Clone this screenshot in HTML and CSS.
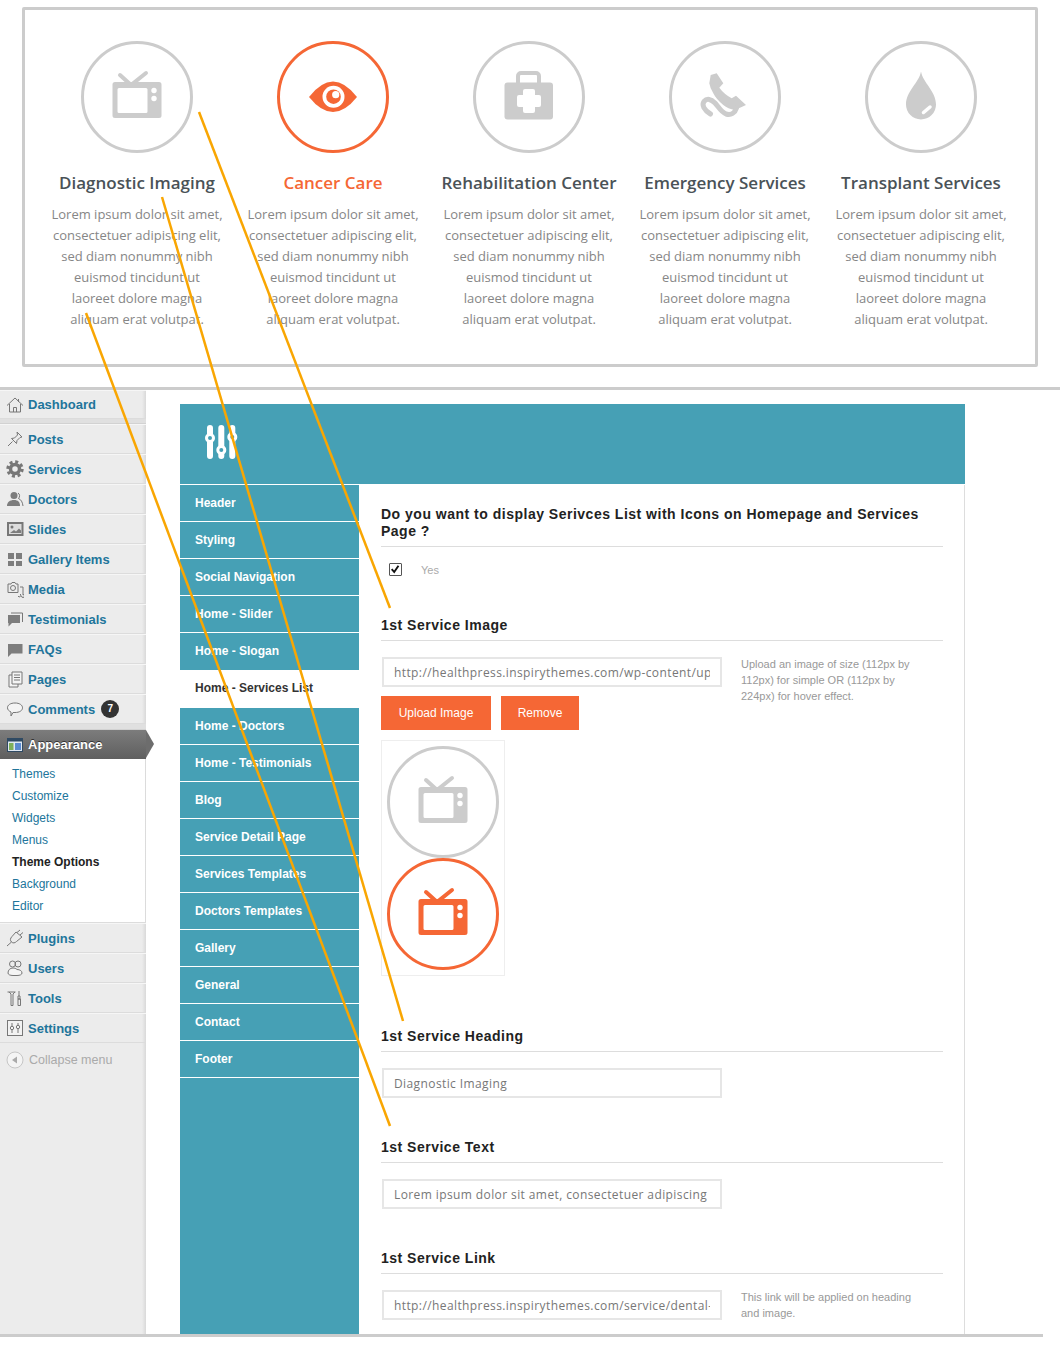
FILE: index.html
```html
<!DOCTYPE html>
<html lang="en">
<head>
  <meta charset="UTF-8" />
  <meta name="viewport" content="width=device-width, initial-scale=1" />
  <title>Services List</title>
  <link rel="stylesheet" href="styles.css">
</head>
<body>
  <svg class="hidden-defs" width="0" height="0">
    <defs>
      <symbol id="ic-tv" viewBox="0 0 112 112">
        <path d="M39 34l11 10 15-12" fill="none" stroke="currentColor" stroke-width="4" stroke-linecap="round" stroke-linejoin="miter" />
        <path fill-rule="evenodd" d="M34 41h44a2.500 2.500 0 0 1 2.500 2.500v31a2.500 2.500 0 0 1-2.500 2.500h-44a2.500 2.500 0 0 1-2.500-2.500v-31a2.500 2.500 0 0 1 2.500-2.500zM38 47a1.500 1.500 0 0 0-1.500 1.500v22a1.500 1.500 0 0 0 1.500 1.500h27a1.500 1.500 0 0 0 1.500-1.500v-22a1.500 1.500 0 0 0-1.500-1.500z" fill="currentColor" />
        <circle cx="73" cy="49.500" r="2.700" fill="#fff" />
        <circle cx="73" cy="57.500" r="2.700" fill="#fff" />
      </symbol>
    </defs>
  </svg>

  <section class="services-preview">
    <div class="services-box">
      <div class="service">
        <svg class="badge" viewBox="0 0 112 112"><circle cx="56" cy="56" r="54.500" /><use href="#ic-tv" width="112" height="112" /></svg>
        <h2>Diagnostic Imaging</h2>
        <p>Lorem ipsum dolor sit amet, consectetuer adipiscing elit, sed diam nonummy nibh euismod tincidunt ut laoreet dolore magna aliquam erat volutpat.</p>
      </div>
      <div class="service hot">
        <svg class="badge" viewBox="0 0 112 112">
          <circle cx="56" cy="56" r="54.500" />
          <path class="glyph" d="M32 56Q44 40.500 56 40.500T80 56Q68 71 56 71T32 56z" />
          <circle class="hole" cx="56.500" cy="55.700" r="11" />
          <circle class="glyph" cx="56.500" cy="55.700" r="7.300" />
          <circle class="hole" cx="58.700" cy="53.700" r="3.600" />
        </svg>
        <h2>Cancer Care</h2>
        <p>Lorem ipsum dolor sit amet, consectetuer adipiscing elit, sed diam nonummy nibh euismod tincidunt ut laoreet dolore magna aliquam erat volutpat.</p>
      </div>
      <div class="service">
        <svg class="badge" viewBox="0 0 112 112">
          <circle cx="56" cy="56" r="54.500" />
          <path class="line" d="M45 42v-7a3 3 0 0 1 3-3h15a3 3 0 0 1 3 3v7" />
          <rect class="glyph" x="31.500" y="41.500" width="48.500" height="37" rx="3" />
          <rect class="hole" x="50" y="48" width="12" height="24" rx="2" />
          <rect class="hole" x="44" y="54" width="24" height="12" rx="2" />
        </svg>
        <h2>Rehabilitation Center</h2>
        <p>Lorem ipsum dolor sit amet, consectetuer adipiscing elit, sed diam nonummy nibh euismod tincidunt ut laoreet dolore magna aliquam erat volutpat.</p>
      </div>
      <div class="service">
        <svg class="badge" viewBox="0 0 112 112">
          <circle cx="56" cy="56" r="54.500" />
          <path class="glyph" d="M41.700 34L47.700 32.300 54.300 42.300 50.300 46.700Q55 53 62.700 57.300L67 54.700 77 64 66 69Q59 68 54.300 64 47 58 44.300 52.300 41 47 40.300 42.300z" />
          <path class="line cord" d="M41.500 73C35 69 32.500 64 35 60.500c3-3.500 7-2.500 11 1.500 4 4.500 6 9 11 11 5 1.500 9-1 10.500-6" />
        </svg>
        <h2>Emergency Services</h2>
        <p>Lorem ipsum dolor sit amet, consectetuer adipiscing elit, sed diam nonummy nibh euismod tincidunt ut laoreet dolore magna aliquam erat volutpat.</p>
      </div>
      <div class="service">
        <svg class="badge" viewBox="0 0 112 112">
          <circle cx="56" cy="56" r="54.500" />
          <path class="glyph" d="M56 30.500C58 42 71 50 71 63.500A15 15 0 0 1 41 63.500C41 50 54 42 56 30.500z" />
          <path class="shine" d="M58.500 71.500L65 66" />
        </svg>
        <h2>Transplant Services</h2>
        <p>Lorem ipsum dolor sit amet, consectetuer adipiscing elit, sed diam nonummy nibh euismod tincidunt ut laoreet dolore magna aliquam erat volutpat.</p>
      </div>
    </div>
  </section>

  <section class="admin">
    <aside class="wp-menu">
      <a class="wp-item solo"><svg viewBox="0 0 18 18"><path class="o" d="M1 9.500L9 2l8 7.500M3.500 8v8h11V8M7.500 16v-4.500h3V16M12.500 3v3" /></svg>Dashboard</a>
      <div class="wp-sep"></div>
      <a class="wp-item"><svg viewBox="0 0 18 18"><path class="o" d="M11 2l5 5-2 .5-3 3-.5 3-5-5 3-.5 3-3zM6.500 11.500L2 16" /></svg>Posts</a>
      <a class="wp-item"><svg viewBox="0 0 18 18"><circle class="cog" cx="9" cy="9" r="7.200" /><circle class="ring" cx="9" cy="9" r="4.500" /></svg>Services</a>
      <a class="wp-item"><svg viewBox="0 0 18 18"><circle class="f" cx="8" cy="5.500" r="3.500" /><path class="f" d="M1 16c0-4 3-6 7-6s6 2 6 6z" /><path class="o" d="M12 3c2 1 2 4 .5 5.500 2.500 1 4 3.500 4.500 7.500" /></svg>Doctors</a>
      <a class="wp-item"><svg viewBox="0 0 18 18"><rect class="frame" x="2" y="3" width="14.500" height="12" /><circle cx="6" cy="7" r="1.500" fill="#777" /><path class="f" d="M4 13l4-3 2 1.500 3-3 2 2v2.500z" /></svg>Slides</a>
      <a class="wp-item"><svg viewBox="0 0 18 18"><path class="f" d="M2 3h6v6H2zM10 3h6v6h-6zM2 11h6v5H2zM10 11h6v5h-6z" /></svg>Gallery Items</a>
      <a class="wp-item"><svg viewBox="0 0 18 18"><path class="o" d="M2 4h3l1-1.500h3L10 4h2v8.500H2z" /><circle class="o" cx="7" cy="8" r="2.500" /><path class="o" d="M14 7h3v8M12 16a1.500 1.500 0 1 0 2-2M15.500 16a1.500 1.500 0 1 0 1.500-1.500" /></svg>Media</a>
      <a class="wp-item"><svg viewBox="0 0 18 18"><path class="f" d="M2 5h12v8H6l-3.500 3.500V13H2z" /><path class="o" d="M5 3h11.500v9" /></svg>Testimonials</a>
      <a class="wp-item"><svg viewBox="0 0 18 18"><path class="f" d="M2 4h14.500v9.500H5.500L2 17z" /></svg>FAQs</a>
      <a class="wp-item"><svg viewBox="0 0 18 18"><path class="soft" d="M3 5h9v12H3z" /><path class="soft" d="M6 2h10v12H6z" /><path class="o" d="M8 5h6M8 7.500h6M8 10h6" /></svg>Pages</a>
      <a class="wp-item"><svg viewBox="0 0 18 18"><path class="soft" d="M9 3c4.500 0 7.500 2 7.500 4.800S13.500 12.500 9 12.500H7L5 16v-4C3 11 1.500 9.800 1.500 7.800 1.500 5 4.500 3 9 3z" /></svg>Comments<span class="count">7</span></a>
      <div class="wp-sep short"></div>
      <a class="wp-item current"><svg viewBox="0 0 18 18"><rect x="1.500" y="2.500" width="15" height="13" fill="#dfe8f2" stroke="#2f4a63" /><rect x="2" y="3" width="14" height="2.500" fill="#2f4a63" /><rect x="3" y="7" width="4.500" height="7" fill="#7fb05a" /><rect x="9" y="7" width="6" height="7" fill="#5b8bd0" /></svg>Appearance</a>
      <nav class="wp-sub">
        <a>Themes</a>
        <a>Customize</a>
        <a>Widgets</a>
        <a>Menus</a>
        <a class="on">Theme Options</a>
        <a>Background</a>
        <a>Editor</a>
      </nav>
      <a class="wp-item"><svg viewBox="0 0 18 18"><path class="o" d="M10 3L6 7.500c-2 2-2 4-.5 5.500s3.500 1 5-.5L16 8zM11 3.500l3-2.500M14 6l3-2.500M5.500 13L1 17" /></svg>Plugins</a>
      <a class="wp-item"><svg viewBox="0 0 18 18"><circle class="o" cx="6.500" cy="5" r="3" /><circle class="o" cx="12" cy="5" r="3" /><path class="soft" d="M2 14c0-3 2-5 5-5 1.500 0 3 .5 4 1.500 3 0 5 1.500 5 3.500 0 1.500-2 2.500-5 2.500H7c-3 0-5-1-5-2.500z" /></svg>Users</a>
      <a class="wp-item"><svg viewBox="0 0 18 18"><path class="o" d="M1.500 3h8M3 3l2 2v11.500h2V5l2-2M13 2v5M12 7h2v3h-2zM12 10h2.500v6.500H12z" /></svg>Tools</a>
      <a class="wp-item"><svg viewBox="0 0 18 18"><rect class="frame thin" x="1.500" y="1.500" width="15" height="15" /><path class="o" d="M6 4v3M6 11v3M12 4v2M12 10v4" /><circle class="o" cx="6" cy="9" r="1.700" /><circle class="o" cx="12" cy="8" r="1.700" /></svg>Settings</a>
      <a class="wp-collapse"><svg viewBox="0 0 18 18"><circle cx="9" cy="9" r="8" fill="#f4f4f4" stroke="#c6c6c6" /><path d="M11 5.500v7L6 9z" fill="#aaa" /></svg>Collapse menu</a>
    </aside>

    <main class="panel">
      <header class="panel-head">
        <svg viewBox="0 0 34 34" width="34" height="34">
          <path class="bar" d="M6 3v28M17.300 3v28M28.300 3v28" />
          <circle class="knob" cx="6" cy="13" r="3.500" />
          <circle class="knob" cx="17.300" cy="25" r="3.500" />
          <circle class="knob" cx="28.300" cy="12" r="3.500" />
        </svg>
      </header>
      <div class="panel-body">
        <ul class="tabs">
          <li>Header</li>
          <li>Styling</li>
          <li>Social Navigation</li>
          <li>Home - Slider</li>
          <li class="no-line">Home - Slogan</li>
          <li class="active">Home - Services List</li>
          <li>Home - Doctors</li>
          <li>Home - Testimonials</li>
          <li>Blog</li>
          <li>Service Detail Page</li>
          <li>Services Templates</li>
          <li>Doctors Templates</li>
          <li>Gallery</li>
          <li>General</li>
          <li>Contact</li>
          <li>Footer</li>
        </ul>
        <div class="options">
          <div class="option">
            <h3>Do you want to display Serivces List with Icons on Homepage and Services Page ?</h3>
            <div class="check-row">
              <span class="check"><svg viewBox="0 0 13 13" width="11" height="11"><path d="M2 6l3 3.500L10 2" fill="none" stroke="#111" stroke-width="2.200" /></svg></span>
              <span class="check-label">Yes</span>
            </div>
          </div>
          <div class="option">
            <h3>1st Service Image</h3>
            <div class="field-row">
              <div class="field-main">
                <input class="text" type="text" readonly value="http://healthpress.inspirythemes.com/wp-content/uploads/2014/06/diagnostic.png">
                <div class="btns">
                  <button class="upload">Upload Image</button>
                  <button class="remove">Remove</button>
                </div>
                <div class="thumb">
                  <svg class="badge" viewBox="0 0 112 112"><circle cx="56" cy="56" r="54.500" /><use href="#ic-tv" width="112" height="112" /></svg>
                  <svg class="badge hot-badge" viewBox="0 0 112 112"><circle cx="56" cy="56" r="54.500" /><use href="#ic-tv" width="112" height="112" /></svg>
                </div>
              </div>
              <p class="help">Upload an image of size (112px by 112px) for simple OR (112px by 224px) for hover effect.</p>
            </div>
          </div>
          <div class="option">
            <h3>1st Service Heading</h3>
            <input class="text" type="text" readonly value="Diagnostic Imaging">
          </div>
          <div class="option">
            <h3>1st Service Text</h3>
            <input class="text" type="text" readonly value="Lorem ipsum dolor sit amet, consectetuer adipiscing elit, sed diam nonummy nibh">
          </div>
          <div class="option">
            <h3>1st Service Link</h3>
            <div class="field-row">
              <div class="field-main">
                <input class="text" type="text" readonly value="http://healthpress.inspirythemes.com/service/dental-therapy/">
              </div>
              <p class="help">This link will be applied on heading and image.</p>
            </div>
          </div>
        </div>
      </div>
    </main>
  </section>
  <div class="end-rule"></div>

  <!-- callout lines drawn over the whole screenshot -->
  <svg class="callouts" viewBox="0 0 1060 1348">
    <path d="M199 112L390 608" />
    <path d="M162 197L403 1021" />
    <path d="M86 313L390 1126" />
  </svg>
</body>
</html>
```

FILE: styles.css
```css
* {
  box-sizing: border-box;
}
body {
  margin: 0;
  width: 1060px;
  height: 1348px;
  position: relative;
  overflow: hidden;
  background: #fff;
  font-family: "Liberation Sans", Arial, sans-serif;
}
.hidden-defs {
  display: block;
  height: 0;
}

/* top picture */
.services-preview {
  padding: 7px 22px 20px;
}
.services-box {
  height: 360px;
  border: 3px solid #ccc;
  border-radius: 2px;
  padding: 31px 14px 0;
  display: flex;
}
.service {
  width: 196px;
  text-align: center;
  flex: none;
}
.badge {
  display: block;
  width: 112px;
  height: 112px;
  color: #ccc;
}
.service .badge {
  margin: 0 auto;
}
.badge > circle:first-child {
  fill: #fff;
  stroke: #ccc;
  stroke-width: 3;
}
.badge .glyph {
  fill: #ccc;
}
.badge .hole {
  fill: #fff;
}
.badge .line {
  fill: none;
  stroke: #ccc;
  stroke-width: 4;
}
.badge .cord {
  stroke-width: 5;
  stroke-linecap: round;
}
.badge .shine {
  fill: none;
  stroke: #fff;
  stroke-width: 3.500;
  stroke-linecap: round;
}
.service.hot .badge > circle:first-child,
.hot-badge > circle:first-child {
  stroke: #f56735;
}
.service.hot .glyph {
  fill: #f56735;
}
.hot-badge {
  color: #f56735;
}
.service h2 {
  margin: 19px 0 0;
  font-family: "Open Sans", sans-serif;
  font-size: 17px;
  line-height: 22px;
  font-weight: 600;
  color: #4a5257;
}
.service.hot h2 {
  color: #f56735;
}
.service p {
  margin: 10px 0 0;
  padding: 0 12px;
  font-family: "Open Sans", sans-serif;
  font-size: 13px;
  line-height: 21px;
  color: #868686;
}

/* admin */
.admin {
  height: 950px;
  border-top: 3px solid #ccc;
  display: flex;
  overflow: hidden;
}
.wp-menu {
  width: 146px;
  flex: none;
  background: linear-gradient(to right, #ececec 142px, #d9d9d9 146px);
  position: relative;
}
.wp-item {
  display: flex;
  align-items: center;
  gap: 4px;
  height: 30px;
  padding-left: 6px;
  font-size: 13px;
  font-weight: bold;
  color: #21759b;
  border-top: 1px solid #f6f6f6;
  border-bottom: 1px solid #dcdcdc;
}
.wp-item.solo {
  height: 29px;
}
.wp-item svg,
.wp-collapse svg {
  width: 18px;
  height: 18px;
  flex: none;
}
.wp-sep {
  height: 5px;
  background: #e0e0e0;
  border-bottom: 1px solid #d2d2d2;
}
.wp-sep.short {
  height: 6px;
}
.wp-item .o {
  fill: none;
  stroke: #777;
  stroke-width: 1;
}
.wp-item .f {
  fill: #7d7d7d;
}
.wp-item .soft {
  fill: #f4f4f4;
  stroke: #777;
  stroke-width: 1;
}
.wp-item .frame {
  fill: #ddd;
  stroke: #777;
  stroke-width: 2;
}
.wp-item .frame.thin {
  fill: #f2f2f2;
  stroke-width: 1;
}
.wp-item .cog {
  fill: none;
  stroke: #777;
  stroke-width: 3;
  stroke-dasharray: 3 2.650;
}
.wp-item .ring {
  fill: none;
  stroke: #777;
  stroke-width: 3.500;
}
.count {
  width: 18px;
  height: 18px;
  margin-left: 2px;
  border-radius: 50%;
  background: #333;
  color: #fff;
  font-size: 10px;
  line-height: 18px;
  text-align: center;
  margin-left: 2px;
}
.wp-item.current {
  position: relative;
  height: 29px;
  border: 0;
  color: #fff;
  background: linear-gradient(to bottom, #7c7c7c, #5f5f5f);
  text-shadow: 0 -1px 0 #333;
}
.wp-item.current::after {
  content: "";
  position: absolute;
  left: 100%;
  top: 0;
  border-left: 8px solid #6d6d6d;
  border-top: 14.500px solid transparent;
  border-bottom: 14.500px solid transparent;
}
.wp-sub {
  background: #fff;
  padding: 4px 0 5px;
  margin-right: 1px;
  border-bottom: 1px solid #dcdcdc;
}
.wp-sub a {
  display: block;
  height: 22px;
  line-height: 22px;
  padding-left: 12px;
  font-size: 12px;
  color: #21759b;
}
.wp-sub a.on {
  font-weight: bold;
  color: #222;
}
.wp-collapse {
  display: flex;
  align-items: center;
  gap: 5px;
  padding: 8px 0 0 6px;
  font-size: 12.500px;
  color: #aaa;
}

.panel {
  width: 785px;
  margin: 14px 0 0 34px;
  flex: none;
}
.panel-head {
  height: 81px;
  padding: 21px 0 0 24px;
  background: #46a0b5;
  border-bottom: 1px solid #fff;
}
.bar {
  fill: none;
  stroke: #fff;
  stroke-width: 6;
  stroke-linecap: round;
}
.knob {
  fill: #46a0b5;
  stroke: #fff;
  stroke-width: 3;
}
.panel-body {
  display: flex;
  height: 900px;
}
.tabs {
  width: 179px;
  flex: none;
  margin: 0;
  padding: 0;
  list-style: none;
  background: #46a0b5;
}
.tabs li {
  height: 37px;
  line-height: 36px;
  padding-left: 15px;
  font-size: 12px;
  font-weight: bold;
  color: #fff;
  border-bottom: 1px solid #fff;
}
.tabs li.no-line {
  border-bottom: 0;
}
.tabs li.active {
  background: #fff;
  color: #333;
  border-bottom: 0;
  height: 38px;
}
.options {
  flex: 1;
  padding: 21px 21px 0 22px;
  border-right: 1px solid #ddd;
}
.option {
  margin-bottom: 41px;
}
.option h3 {
  margin: 0 0 16px;
  padding-bottom: 6px;
  border-bottom: 1px solid #ddd;
  font-size: 14px;
  line-height: 17px;
  font-weight: bold;
  letter-spacing: 0.5px;
  color: #222;
}
.check-row {
  display: flex;
  align-items: center;
  height: 13px;
  padding-left: 8px;
}
.check {
  width: 13px;
  height: 13px;
  border: 1px solid #555;
  border-radius: 1px;
  display: flex;
  align-items: center;
  justify-content: center;
  background: #fff;
}
.check-label {
  margin-left: 19px;
  font-size: 11px;
  color: #aaa;
}
.text {
  display: block;
  width: 340px;
  height: 30px;
  margin-left: 1px;
  padding: 0 10px;
  border: 2px solid #e6e6e6;
  background: #fff;
  outline: none;
  font-family: "Open Sans", sans-serif;
  font-size: 12px;
  letter-spacing: 0.4px;
  color: #777;
}
.field-row {
  display: flex;
  gap: 19px;
}
.field-main {
  width: 341px;
  flex: none;
}
.help {
  width: 180px;
  margin: -1px 0 0;
  font-size: 11px;
  line-height: 16px;
  color: #999;
}
.btns {
  display: flex;
  gap: 10px;
  margin-top: 9px;
}
.btns button {
  height: 34px;
  padding: 0;
  border: 0;
  background: #f56735;
  color: #fff;
  font-family: "Liberation Sans", Arial, sans-serif;
  font-size: 12px;
}
.upload {
  width: 110px;
}
.remove {
  width: 78px;
}
.thumb {
  width: 124px;
  height: 236px;
  margin: 10px 0 11px;
  padding: 5px;
  border: 1px solid #eee;
}

.end-rule {
  width: 1043px;
  height: 3px;
  background: #ccc;
  margin-top: -3px;
  position: relative;
}
.callouts {
  position: absolute;
  left: 0;
  top: 0;
  width: 1060px;
  height: 1348px;
}
.callouts path {
  fill: none;
  stroke: #f9a602;
  stroke-width: 2.500;
}
```
